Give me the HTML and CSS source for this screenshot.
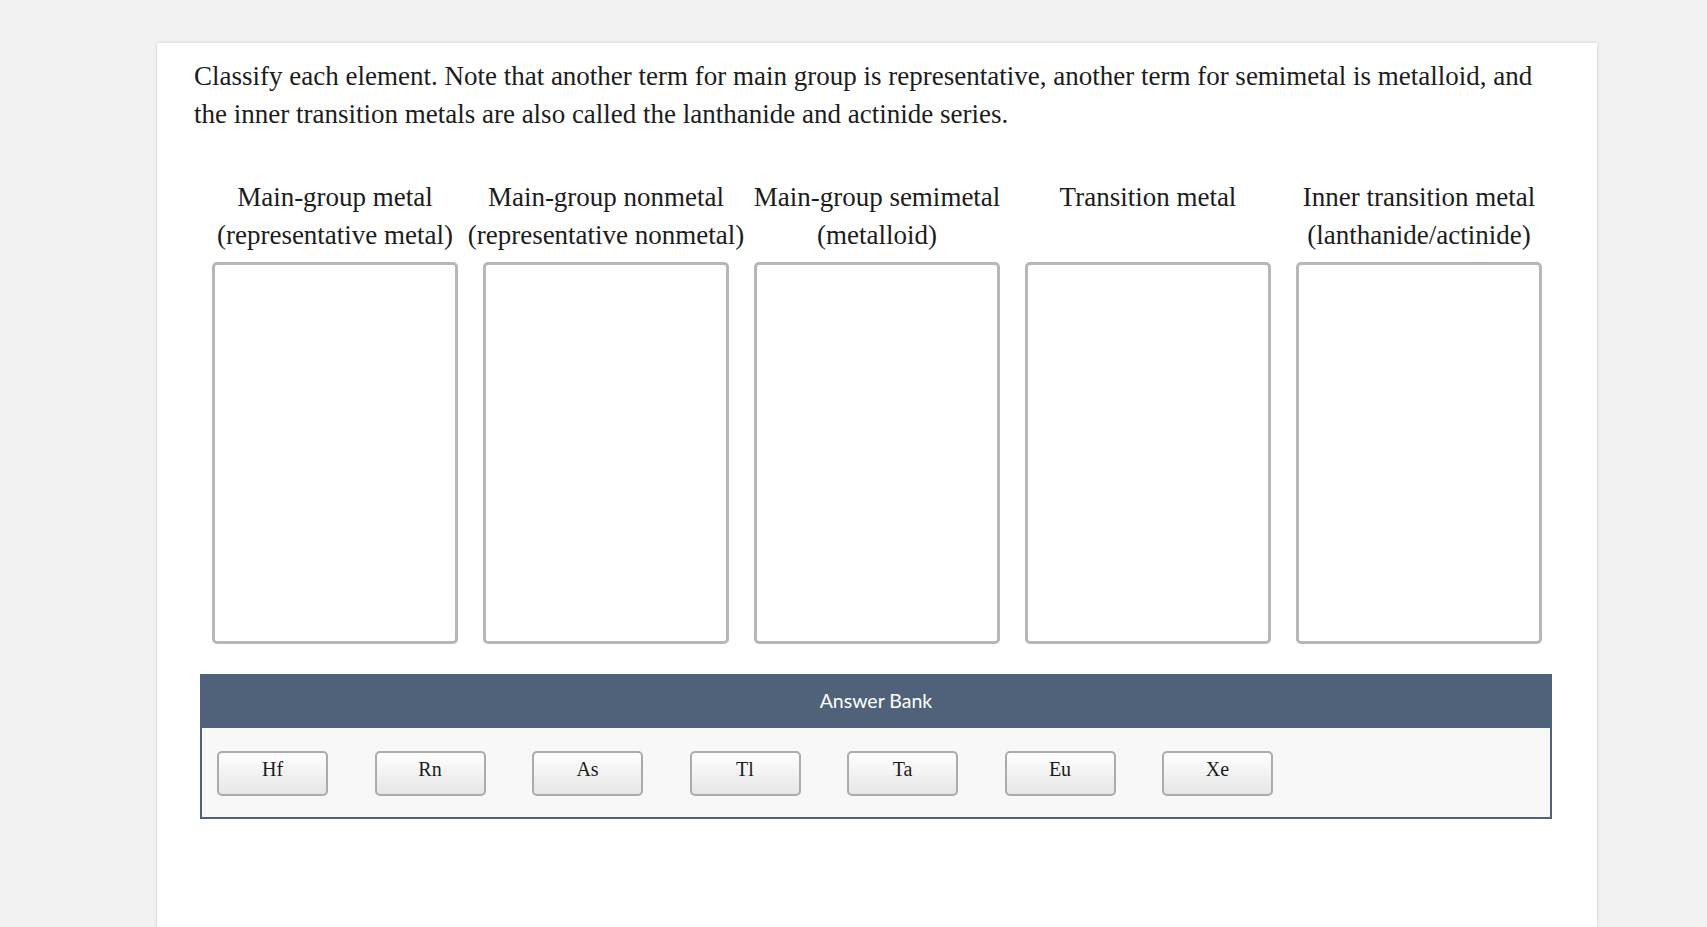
FILE: index.html
```html
<!DOCTYPE html>
<html>
<head>
<meta charset="utf-8">
<link rel="stylesheet" href="styles.css">
</head>
<body>
<div class="card">
  <p class="prompt">Classify each element. Note that another term for main group is representative, another term for semimetal is metalloid, and the inner transition metals are also called the lanthanide and actinide series.</p>
  <div class="columns">
    <div class="col">
      <div class="label"><div>Main-group metal</div><div>(representative metal)</div></div>
      <div class="drop"></div>
    </div>
    <div class="col">
      <div class="label"><div>Main-group nonmetal</div><div>(representative nonmetal)</div></div>
      <div class="drop"></div>
    </div>
    <div class="col">
      <div class="label"><div>Main-group semimetal</div><div>(metalloid)</div></div>
      <div class="drop"></div>
    </div>
    <div class="col">
      <div class="label"><div>Transition metal</div><div>&nbsp;</div></div>
      <div class="drop"></div>
    </div>
    <div class="col">
      <div class="label"><div>Inner transition metal</div><div>(lanthanide/actinide)</div></div>
      <div class="drop"></div>
    </div>
  </div>
  <div class="bank">
    <div class="bank-head">Answer Bank</div>
    <div class="bank-body">
      <div class="chip">Hf</div>
      <div class="chip">Rn</div>
      <div class="chip">As</div>
      <div class="chip">Tl</div>
      <div class="chip">Ta</div>
      <div class="chip">Eu</div>
      <div class="chip">Xe</div>
    </div>
  </div>
</div>
</body>
</html>
```

FILE: styles.css
```css
html, body {
  margin: 0;
  padding: 0;
  background: #f2f2f2;
  height: 100%;
  overflow: hidden;
}
body {
  font-family: "Liberation Serif", "Times New Roman", serif;
  color: #1c1c1c;
}
.card {
  margin-left: 157px;
  margin-top: 43px;
  width: 1440px;
  min-height: 884px;
  background: #fff;
  box-shadow: 0 0 3px rgba(0,0,0,0.18);
  padding: 14px 0 0 37px;
  box-sizing: border-box;
}
.prompt {
  margin: 0;
  width: 1370px;
  font-size: 27px;
  line-height: 38px;
}
.columns {
  display: flex;
  gap: 25px;
  margin-top: 45px;
  margin-left: 18px;
}
.col {
  width: 246px;
  display: flex;
  flex-direction: column;
  align-items: center;
}
.label {
  display: flex;
  flex-direction: column;
  align-items: center;
  font-size: 27px;
  line-height: 38px;
  white-space: nowrap;
}
.drop {
  margin-top: 8px;
  width: 246px;
  height: 382px;
  box-sizing: border-box;
  border: 3px solid #b7b7b7;
  border-radius: 5px;
}
.bank {
  margin-top: 30px;
  margin-left: 6px;
  width: 1352px;
  border: 2px solid #506279;
  box-sizing: border-box;
}
.bank-head {
  background: #506279;
  height: 52px;
  line-height: 50px;
  text-align: center;
  color: #fff;
  font-family: Lato, "Noto Sans", sans-serif;
  font-size: 19.5px;
}
.bank-body {
  background: #f8f8f8;
  display: flex;
  gap: 46.5px;
  padding: 23px 15px 21px;
}
.chip {
  width: 111px;
  height: 45px;
  box-sizing: border-box;
  border: 2px solid #ababab;
  border-radius: 5px;
  background: linear-gradient(#ffffff, #e6e6e6);
  text-align: center;
  font-size: 20px;
  line-height: 33px;
  color: #1c1c1c;
}
```
